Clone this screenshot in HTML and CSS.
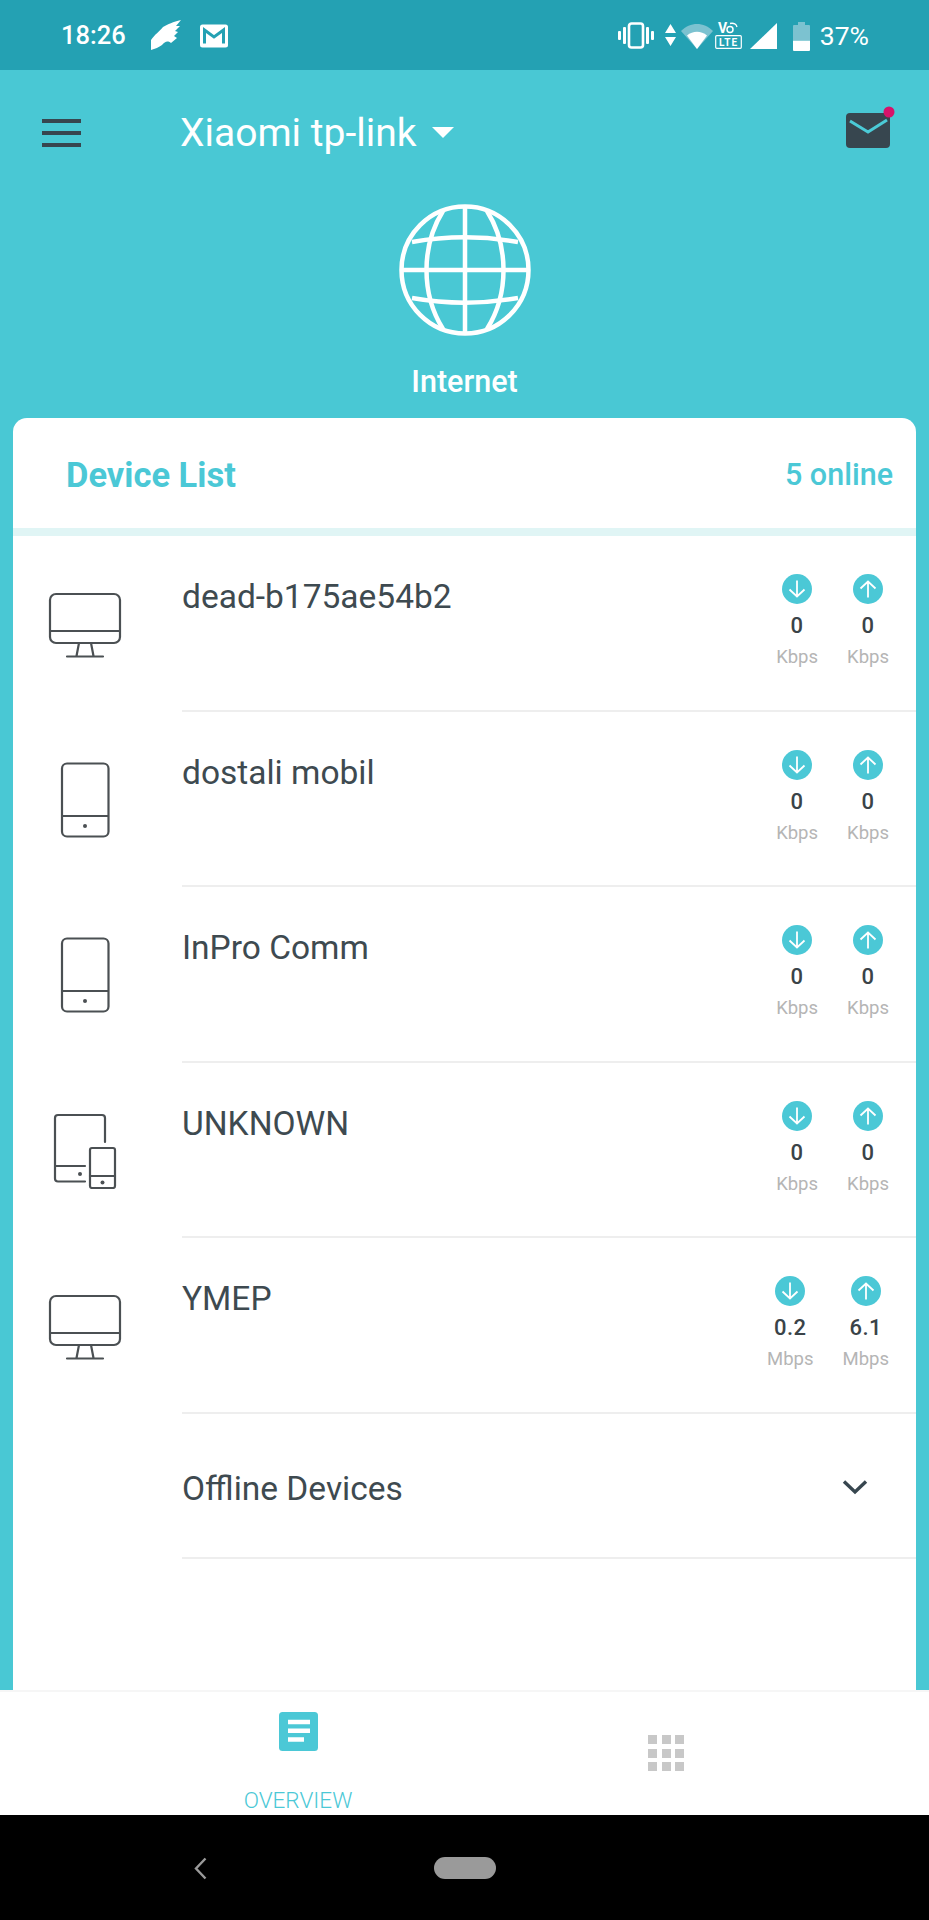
FILE: index.html
```html
<!DOCTYPE html>
<html lang="en">
<head>
<meta charset="utf-8">
<title>Tether</title>
<link rel="stylesheet" href="styles.css">
</head>
<body>
<svg class="defs" width="0" height="0" aria-hidden="true">
  <symbol id="monitor" viewBox="0 0 74 66">
    <g fill="none" stroke="#4b5053" stroke-width="2.200" stroke-linecap="round" stroke-linejoin="round">
      <rect x="2" y="2" width="70" height="49" rx="6"/>
      <path d="M2 39H72M31 51L28.500 64M43 51L45.500 64M19 64.500H55"/>
    </g>
  </symbol>
  <symbol id="phone" viewBox="0 0 50 76">
    <g fill="none" stroke="#4b5053" stroke-width="2.200" stroke-linejoin="round">
      <rect x="2" y="1.500" width="46.500" height="73" rx="5"/>
      <path d="M2 54H48.500"/>
    </g>
    <circle cx="25" cy="64" r="2" fill="#4b5053"/>
  </symbol>
  <symbol id="multi" viewBox="0 0 64 76">
    <g fill="none" stroke="#4b5053" stroke-width="2.200" stroke-linecap="round" stroke-linejoin="round">
      <path d="M32 68.500H5a3 3 0 0 1-3-3V5a3 3 0 0 1 3-3H49a3 3 0 0 1 3 3V29M2 53H32"/>
      <rect x="37" y="35" width="25" height="40" rx="2"/>
      <path d="M37 63H62"/>
    </g>
    <circle cx="27" cy="61" r="2" fill="#4b5053"/>
    <circle cx="49.500" cy="69.500" r="2" fill="#4b5053"/>
  </symbol>
  <symbol id="down" viewBox="0 0 30 30">
    <circle cx="15" cy="15" r="15" fill="#4bc8d6"/>
    <path d="M15 6.500V22.500M7.500 15.500L15 22.500L22.500 15.500" fill="none" stroke="#fff" stroke-width="1.800"/>
  </symbol>
  <symbol id="up" viewBox="0 0 30 30">
    <circle cx="15" cy="15" r="15" fill="#4bc8d6"/>
    <path d="M15 23.500V7.500M7.500 14.500L15 7.500L22.500 14.500" fill="none" stroke="#fff" stroke-width="1.800"/>
  </symbol>
</svg>

<div class="phone">
  <div class="statusbar">
    <span class="time">18:26</span>
    <svg class="ic-wing" width="32" height="32" viewBox="0 0 32 32"><path d="M1 31L1 21C5 15 9 13 13 8C18 5 23 3 31 1L26 7L30 7L25 12L28 13L24 17L27 19L21 24C17 21 15 23 12 26C9 28 5 30 1 31Z" fill="#fff"/></svg>
    <svg class="ic-gmail" width="28" height="24" viewBox="0 0 28 24"><rect width="28" height="23" y="0.500" rx="2.500" fill="#fff"/><path d="M4.500 19.500V6L14 13L23.500 6V19.500" fill="none" stroke="#24a1b3" stroke-width="3"/></svg>
    <div class="status-right">
      <svg width="36" height="27" viewBox="0 0 36 27"><g fill="#fff"><rect x="0" y="9" width="3" height="9" rx="1"/><rect x="5" y="5" width="3" height="17" rx="1"/><rect x="28" y="5" width="3" height="17" rx="1"/><rect x="33" y="9" width="3" height="9" rx="1"/></g><rect x="11" y="1.500" width="14" height="24" rx="2.500" fill="none" stroke="#fff" stroke-width="2.600"/></svg>
      <svg class="updown" width="11" height="22" viewBox="0 0 11 22"><path d="M5.500 0L11 9H0ZM0 13H11L5.500 22Z" fill="#fff"/></svg>
      <svg class="wifi" width="32" height="26" viewBox="0 0 32 26"><path d="M0 8C9-1.500 23-1.500 32 8L16 26Z" fill="#7cc2d0"/><path d="M6 12.500C12 7.500 20 7.500 26 12.500L16 26Z" fill="#fff"/></svg>
      <svg class="volte" width="27" height="28" viewBox="0 0 27 28"><text x="3" y="12" class="volte-v">V</text><circle cx="15" cy="8.500" r="3" fill="none" stroke="#fff" stroke-width="1.500"/><path d="M15 2.500C19 1.500 21.500 3.500 22 6" fill="none" stroke="#fff" stroke-width="1.300"/><rect x="0.700" y="14.700" width="25.600" height="12.600" rx="1" fill="none" stroke="#fff" stroke-width="1.200"/><text x="13.500" y="25" text-anchor="middle" class="volte-l">LTE</text></svg>
      <svg class="signal" width="27" height="26" viewBox="0 0 27 26"><path d="M27 0V26H0Z" fill="#fff"/></svg>
      <svg class="battery" width="17" height="29" viewBox="0 0 17 29"><path d="M5 0H12V3H16a1 1 0 0 1 1 1V18H0V4a1 1 0 0 1 1-1H5Z" fill="#7cc2d0"/><path d="M0 18.500H17V28a1 1 0 0 1-1 1H1a1 1 0 0 1-1-1Z" fill="#fff"/></svg>
      <span class="pct">37%</span>
    </div>
  </div>

  <header class="header">
    <div class="nav">
      <div class="burger"><i></i><i></i><i></i></div>
      <div class="title">Xiaomi tp-link</div>
      <svg class="caret" width="22" height="11" viewBox="0 0 22 11"><path d="M0 0H22L11 11Z" fill="#fff"/></svg>
      <svg class="mail" width="50" height="42" viewBox="0 0 50 42">
        <rect x="1" y="7" width="44" height="35" rx="4" fill="#37464f"/>
        <path d="M5 15L23 26L42 14" fill="none" stroke="#4bcbd7" stroke-width="3"/>
        <circle cx="44" cy="6" r="5.500" fill="#d6136a"/>
      </svg>
    </div>
    <svg class="globe" width="138" height="138" viewBox="0 0 138 138">
      <g fill="none" stroke="#fff" stroke-width="4.500">
        <circle cx="69" cy="69" r="63.500"/>
        <path d="M69 6V132M6 69H132"/>
        <path d="M47 10C25 45 25 93 47 128M91 10C113 45 113 93 91 128"/>
        <path d="M16 41C50 35 88 35 122 41M16 97C50 103 88 103 122 97"/>
      </g>
    </svg>
    <div class="internet">Internet</div>
  </header>

  <main class="card">
    <div class="card-head">
      <span class="card-title">Device List</span>
      <span class="card-count">5 online</span>
    </div>

    <div class="row">
      <div class="dev-icon"><svg class="i-monitor"><use href="#monitor"/></svg></div>
      <div class="row-body">
        <div class="name">dead-b175ae54b2</div>
        <div class="speeds">
          <div class="speed"><svg class="arrow"><use href="#down"/></svg><b>0</b><small>Kbps</small></div>
          <div class="speed"><svg class="arrow"><use href="#up"/></svg><b>0</b><small>Kbps</small></div>
        </div>
      </div>
    </div>

    <div class="row">
      <div class="dev-icon"><svg class="i-phone"><use href="#phone"/></svg></div>
      <div class="row-body">
        <div class="name">dostali mobil</div>
        <div class="speeds">
          <div class="speed"><svg class="arrow"><use href="#down"/></svg><b>0</b><small>Kbps</small></div>
          <div class="speed"><svg class="arrow"><use href="#up"/></svg><b>0</b><small>Kbps</small></div>
        </div>
      </div>
    </div>

    <div class="row">
      <div class="dev-icon"><svg class="i-phone"><use href="#phone"/></svg></div>
      <div class="row-body">
        <div class="name">InPro Comm</div>
        <div class="speeds">
          <div class="speed"><svg class="arrow"><use href="#down"/></svg><b>0</b><small>Kbps</small></div>
          <div class="speed"><svg class="arrow"><use href="#up"/></svg><b>0</b><small>Kbps</small></div>
        </div>
      </div>
    </div>

    <div class="row">
      <div class="dev-icon"><svg class="i-multi"><use href="#multi"/></svg></div>
      <div class="row-body">
        <div class="name">UNKNOWN</div>
        <div class="speeds">
          <div class="speed"><svg class="arrow"><use href="#down"/></svg><b>0</b><small>Kbps</small></div>
          <div class="speed"><svg class="arrow"><use href="#up"/></svg><b>0</b><small>Kbps</small></div>
        </div>
      </div>
    </div>

    <div class="row">
      <div class="dev-icon"><svg class="i-monitor"><use href="#monitor"/></svg></div>
      <div class="row-body">
        <div class="name">YMEP</div>
        <div class="speeds">
          <div class="speed"><svg class="arrow"><use href="#down"/></svg><b>0.2</b><small>Mbps</small></div>
          <div class="speed"><svg class="arrow"><use href="#up"/></svg><b>6.1</b><small>Mbps</small></div>
        </div>
      </div>
    </div>

    <div class="offline">
      <span class="name">Offline Devices</span>
      <svg class="chev" width="26" height="16" viewBox="0 0 26 16"><path d="M2 2.500L13 13L24 2.500" fill="none" stroke="#37464f" stroke-width="3.400"/></svg>
    </div>
  </main>

  <nav class="tabs">
    <div class="tab active">
      <svg width="39" height="39" viewBox="0 0 39 39"><rect width="39" height="39" rx="3.500" fill="#4bc8d6"/><path d="M9 10H31M9 18.800H31M9 27.500H25" stroke="#fff" stroke-width="4.500"/></svg>
      <span class="tab-label">OVERVIEW</span>
    </div>
    <div class="tab">
      <div class="grid-ic"><i></i><i></i><i></i><i></i><i></i><i></i><i></i><i></i><i></i></div>
    </div>
  </nav>

  <footer class="sysnav">
    <svg class="back" width="13" height="23" viewBox="0 0 13 23"><path d="M11.500 1.500L2 11.500L11.500 21.500" fill="none" stroke="#9a9a9a" stroke-width="2.400"/></svg>
    <div class="pill"></div>
  </footer>
</div>
</body>
</html>
```

FILE: styles.css
```css
* { box-sizing: border-box; }
html, body { margin: 0; padding: 0; }
body { font-family: Roboto, "Liberation Sans", sans-serif; background: #000; }
.defs { position: absolute; }

.phone {
  width: 929px;
  height: 1920px;
  display: flex;
  flex-direction: column;
  overflow: hidden;
  background: #49c8d4;
}

/* status bar */
.statusbar {
  flex: 0 0 70px;
  background: #24a1b3;
  display: flex;
  align-items: center;
  padding: 0 60px 0 61px;
  color: #fff;
}
.time { font-size: 25.500px; font-weight: 500; width: 89px; }
.ic-wing { margin-right: 18px; }
.ic-gmail { margin-top: 1px; }
.status-right { margin-left: auto; display: flex; align-items: center; }
.updown { margin-left: 11px; }
.wifi { margin-left: 5px; margin-top: 2px; }
.volte { margin-left: 2px; }
.volte-v { font: 700 14px Roboto, sans-serif; fill: #fff; }
.volte-l { font: 700 10px Roboto, sans-serif; fill: #fff; letter-spacing: 1px; }
.signal { margin-left: 8px; margin-top: 2px; }
.battery { margin-left: 16px; margin-top: 2px; }
.pct { font-size: 26.500px; margin-left: 10px; }

/* header */
.header { flex: 0 0 348px; display: flex; flex-direction: column; align-items: center; }
.nav { align-self: stretch; height: 126px; display: flex; align-items: center; padding: 0 34px 0 42px; }
.burger { width: 39px; display: flex; flex-direction: column; gap: 8px; }
.burger i { display: block; height: 4px; background: #37464f; }
.title { margin-left: 99px; font-size: 39px; color: #fff; line-height: 44px; }
.caret { margin-left: 16px; margin-top: -2px; }
.mail { margin-left: auto; margin-top: -12px; }
.globe { margin-top: 5px; }
.internet { margin-top: 26px; font-size: 30.500px; font-weight: 500; line-height: 34px; color: #fff; }

/* card */
.card {
  flex: 1;
  margin: 0 13px;
  background: #fff;
  border-radius: 14px 14px 0 0;
  overflow: hidden;
}
.card-head {
  height: 118px;
  padding: 3px 23px 0 53px;
  display: flex;
  align-items: center;
  justify-content: space-between;
  border-bottom: 8px solid #e0f5f5;
  color: #4bc8d6;
}
.card-title { font-size: 34.500px; font-weight: 700; }
.card-count { font-size: 30.500px; font-weight: 500; }

.row { height: 175.500px; display: flex; }
.dev-icon { flex: 0 0 169px; padding-right: 25px; display: flex; justify-content: center; }
.i-monitor { width: 74px; height: 66px; margin-top: 56px; }
.i-phone { width: 50px; height: 76px; margin-top: 50px; }
.i-multi { width: 64px; height: 76px; margin-top: 50px; }
.row-body {
  flex: 1;
  display: flex;
  justify-content: space-between;
  padding: 37px 27px 0 0;
  border-bottom: 2px solid #eeeeee;
}
.name { font-size: 33.500px; line-height: 48px; color: #3e4a50; }
.speeds { display: flex; gap: 29px; margin-top: 1px; }
.speed { display: flex; flex-direction: column; align-items: center; }
.arrow { width: 30px; height: 30px; }
.speed b { font-size: 22px; font-weight: 500; line-height: 30px; margin-top: 7px; color: #3a4348; letter-spacing: 0.500px; }
.speed small { font-size: 18.500px; line-height: 30px; margin-top: 1px; color: #b5b5b5; }

.offline {
  margin-left: 169px;
  height: 145px;
  padding: 7px 48px 0 0;
  display: flex;
  align-items: center;
  justify-content: space-between;
  border-bottom: 2px solid #eeeeee;
}
.chev { margin-top: -4px; }

/* tabs */
.tabs {
  flex: 0 0 125px;
  background: #fff;
  border-top: 2px solid #f6f6f6;
  padding-left: 114px;
  display: grid;
  grid-template-columns: 368px 368px;
  justify-content: start;
}
.tab { display: flex; flex-direction: column; align-items: center; }
.tab.active svg { margin-top: 20px; }
.tab-label { margin-top: 35px; font-size: 22.500px; line-height: 28px; font-weight: 300; color: #4bc8d6; }
.grid-ic {
  margin-top: 43px;
  width: 36px;
  display: grid;
  grid-template-columns: repeat(3, 9px);
  grid-auto-rows: 9px;
  justify-content: space-between;
  row-gap: 4.500px;
}
.grid-ic i { background: #c8c8c8; }

/* system nav */
.sysnav { flex: 0 0 105px; background: #000; display: flex; align-items: flex-start; padding: 42px 0 0 194px; }
.pill { margin-left: 227px; width: 62px; height: 22px; border-radius: 11px; background: #9a9a9a; }
```
